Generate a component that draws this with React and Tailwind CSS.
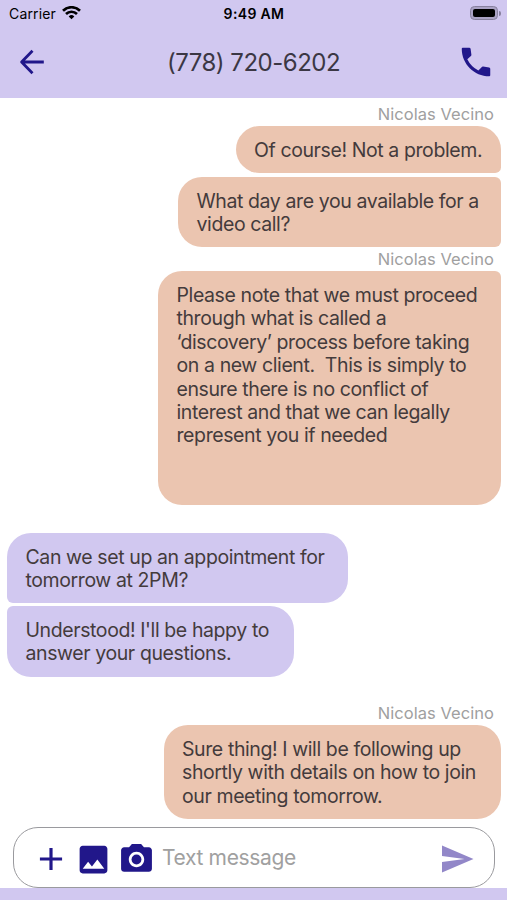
import { MdAdd, MdImage, MdPhotoCamera, MdSend } from "react-icons/md";

function StatusBar() {
  return (
    <div className="flex h-7 items-center justify-between pl-[9px] pr-[6px] text-black">
      <div className="flex w-[119px] items-center gap-[6px]">
        <span className="text-[14px] leading-5 tracking-[0.15px]">Carrier</span>
        <svg width="19" height="14" viewBox="0 0 19 14" className="-mt-[2px]" fill="none" stroke="currentColor" strokeWidth="2.7">
          <path d="M1 4.700a12.200 12.200 0 0 1 17 0" />
          <path d="M4 8a7.900 7.900 0 0 1 11 0" />
          <path d="M9.500 13.300 6.700 10.400a4 4 0 0 1 5.600 0z" fill="currentColor" stroke="none" />
        </svg>
      </div>
      <span className="text-[14px] font-semibold leading-5 tracking-[0.35px]">9:49 AM</span>
      <div className="-mt-[2px] flex w-[121px] items-center justify-end gap-px">
        <div className="h-[14px] w-[28px] rounded-[4.5px] border border-[#88819f] bg-[#aaa2c4] p-[2px]">
          <div className="h-full rounded-[2px] bg-black" />
        </div>
        <div className="h-[5px] w-[2px] rounded-r-full bg-[#88819f]" />
      </div>
    </div>
  );
}

function PhoneIcon() {
  return (
    <svg width="38" height="38" viewBox="0 0 24 24" fill="#21178a">
      <path d="M3.600 3h4.100q.8 0 .900.800l.5 3.600q0 .5-.3.800L6.500 10.300Q8.900 15.100 13.500 17.400L15.700 15.100q.3-.3.800-.2l3.800.500q.7.100.7.900V20.400q0 .6-.6.6C10.800 21 3 13.200 3 3.600q0-.6.6-.6z" />
    </svg>
  );
}

function Header() {
  return (
    <header className="h-[98px] bg-[#d1c8f0]">
      <StatusBar />
      <div className="flex h-[68px] items-center justify-between pl-[19px] pr-[12px]">
        <svg width="26" height="26" viewBox="0 0 26 26" fill="none" stroke="#21178a" strokeWidth="2.8">
          <path d="M13.5 1.800 2.600 13l10.900 11.200M2.600 13H24.800" strokeLinejoin="round" />
        </svg>
        <h1 className="pl-[5px] pt-[2px] text-[24px] leading-8 tracking-[-0.5px] text-[#3b3744]">(778) 720-6202</h1>
        <PhoneIcon />
      </div>
    </header>
  );
}

function Sender({ className = "" }) {
  return (
    <div
      className={`h-[24px] pr-[7px] text-right text-[16.5px] leading-[24px] tracking-[0.05px] text-[#a0a0a0] ${className}`}
    >
      Nicolas Vecino
    </div>
  );
}

function Bubble({ lines, className }) {
  return (
    <div
      className={`flex flex-col whitespace-pre pl-[18.5px] pt-[13px] text-[19.5px] leading-[23.4px] tracking-[-0.4px] text-[#443b3c] ${className}`}
    >
      {lines.map((l) => (
        <span key={l}>{l}</span>
      ))}
    </div>
  );
}

export default function App() {
  return (
    <div className="flex h-[900px] w-[507px] flex-col overflow-hidden bg-white font-['Inter','Liberation_Sans',sans-serif]">
      <Header />
      <main className="flex h-[729px] flex-col pl-[7px] pr-[6px] pt-[4px]">
        <Sender />
        <Bubble
          lines={["Of course! Not a problem."]}
          className="h-[47px] w-[265.5px] self-end rounded-[24px] rounded-br-[6px] bg-[#ebc5b0]"
        />
        <Bubble
          lines={["What day are you available for a", "video call?"]}
          className="mt-[4px] h-[70px] w-[323px] self-end rounded-l-[24px] rounded-r-[6px] bg-[#ebc5b0]"
        />
        <Sender />
        <Bubble
          lines={[
            "Please note that we must proceed",
            "through what is called a",
            "‘discovery’ process before taking",
            "on a new client.  This is simply to",
            "ensure there is no conflict of",
            "interest and that we can legally",
            "represent you if needed",
          ]}
          className="h-[234px] w-[343px] self-end rounded-[24px] rounded-tr-[6px] bg-[#ebc5b0]"
        />
        <Bubble
          lines={["Can we set up an appointment for", "tomorrow at 2PM?"]}
          className="mt-[27.5px] h-[70.5px] w-[341px] rounded-[24px] rounded-bl-[6px] bg-[#d1c8f0]"
        />
        <Bubble
          lines={["Understood! I'll be happy to", "answer your questions."]}
          className="mt-[3px] h-[71px] w-[287px] rounded-[24px] rounded-tl-[6px] bg-[#d1c8f0]"
        />
        <Sender className="mt-[24px]" />
        <Bubble
          lines={["Sure thing! I will be following up", "shortly with details on how to join", "our meeting tomorrow."]}
          className="h-[94px] w-[337.5px] self-end rounded-[24px] bg-[#ebc5b0]"
        />
      </main>
      <div className="flex h-[73px] flex-col bg-[linear-gradient(to_bottom,#fff_61px,#d1c8f0_61px)] pl-[13px] pr-[12px]">
        <div className="flex h-[61px] items-center rounded-[25px] border border-[#9a9a9e] bg-white pl-[18px] pr-[19px] text-[#21178a]">
          <MdAdd size={38} className="mt-[2px]" />
          <MdImage size={37} className="ml-[5px] mt-[3px]" />
          <MdPhotoCamera size={37} className="ml-[6px] mt-[3px]" />
          <span className="ml-[7px] mt-px text-[21px] leading-7 tracking-[-0.350px] text-[#a0a0a0]">Text message</span>
          <MdSend size={36} color="#9287c8" className="ml-auto mt-[3px]" />
        </div>
      </div>
    </div>
  );
}
